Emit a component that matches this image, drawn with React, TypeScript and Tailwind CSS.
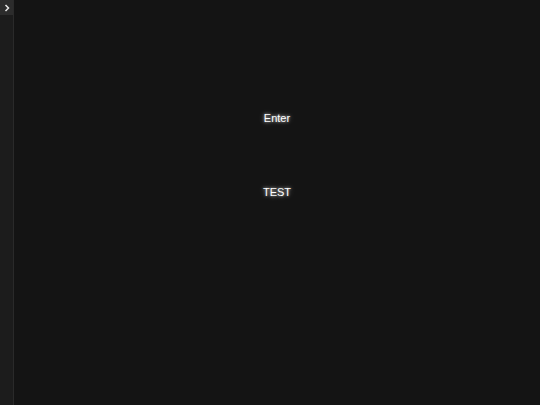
import React from "react";

export default function App() {
  return (
    <div className="flex h-[405px] w-[540px] bg-[#141414]" style={{ fontFamily: '"Liberation Sans", Arial, sans-serif' }}>
      <div className="flex w-[14px] flex-col border-r border-[#2a2a2a] bg-[#1c1c1c]">
        <div className="flex h-[15px] w-[13px] items-center justify-center bg-[#2c2c2c]">
          <svg width="6" height="8" viewBox="0 0 6 8" fill="none">
            <path d="M1.5 1 L4.5 4 L1.5 7" stroke="#e5e5e5" strokeWidth="1.5" />
          </svg>
        </div>
      </div>
      <div className="flex flex-1 flex-col items-center">
        <div className="mt-[110px] text-[11px] leading-[16px] text-white [text-shadow:0_0_3px_rgba(255,255,255,0.7),0_0_6px_rgba(255,255,255,0.4)]">Enter</div>
        <div className="mt-[58px] text-[11px] leading-[16px] text-white [text-shadow:0_0_3px_rgba(255,255,255,0.7),0_0_6px_rgba(255,255,255,0.4)]">TEST</div>
      </div>
    </div>
  );
}
